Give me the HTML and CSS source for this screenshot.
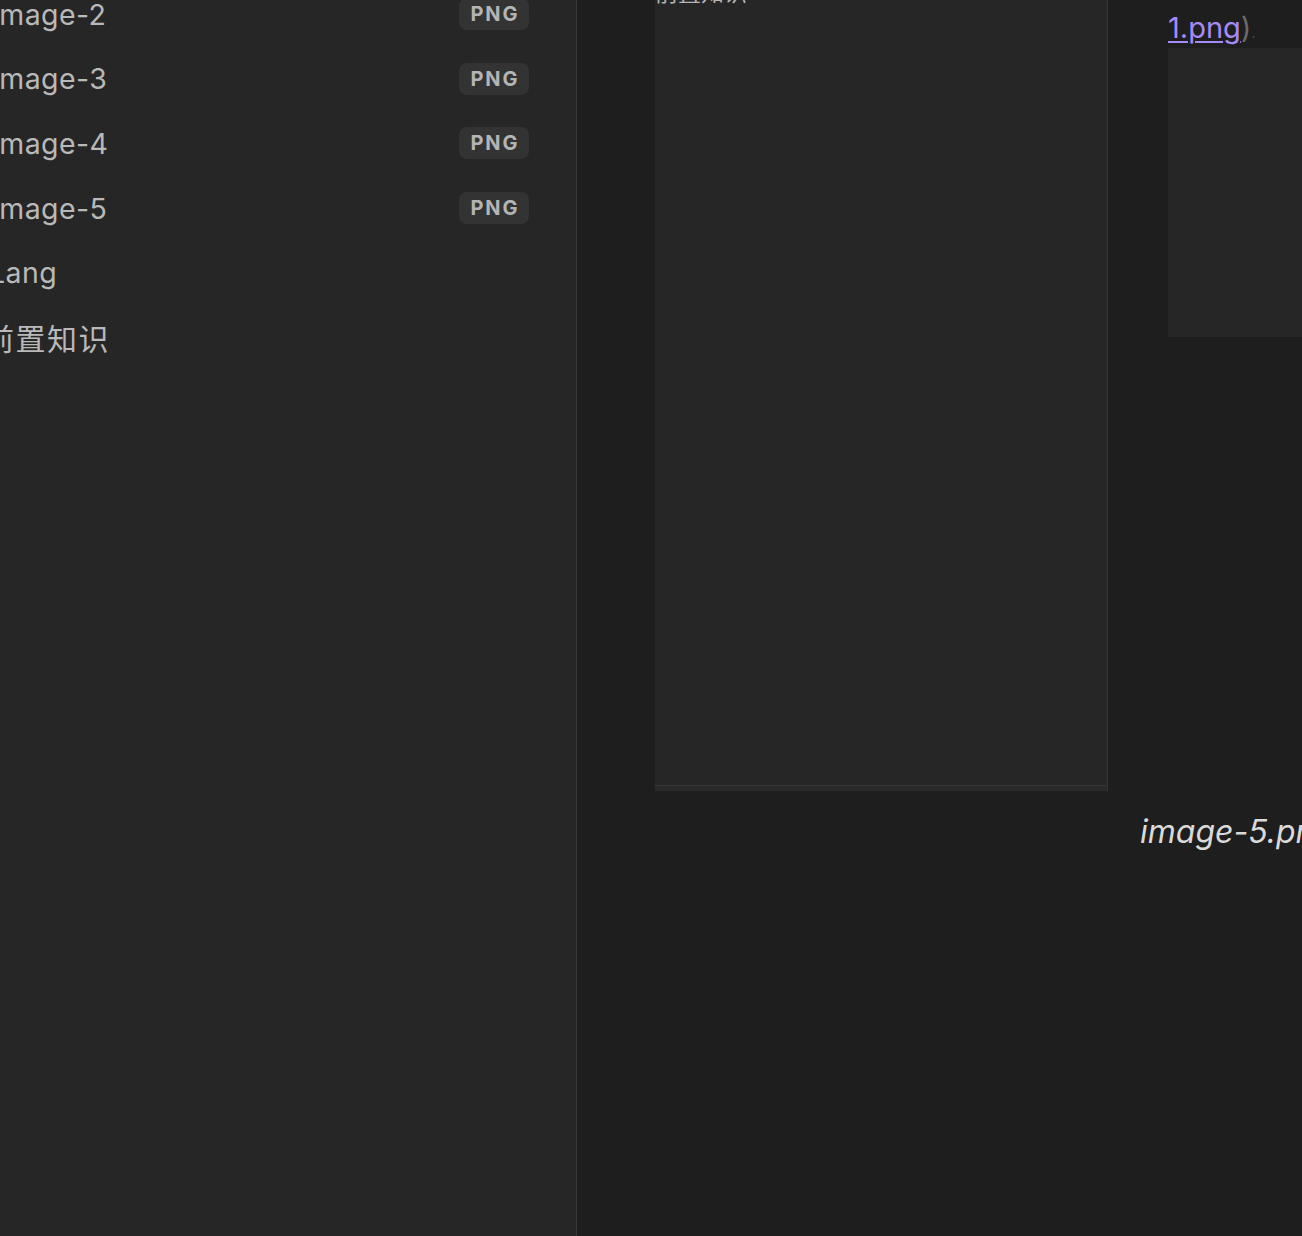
FILE: index.html
```html
<!DOCTYPE html>
<html lang="zh">
<head>
<meta charset="utf-8">
<link rel="stylesheet" href="styles.css">
</head>
<body>
<div class="app">
  <aside class="sidebar">
    <ul class="files">
      <li class="file"><span class="name">image-2</span><span class="badge">PNG</span></li>
      <li class="file"><span class="name">image-3</span><span class="badge">PNG</span></li>
      <li class="file"><span class="name">image-4</span><span class="badge">PNG</span></li>
      <li class="file"><span class="name">image-5</span><span class="badge">PNG</span></li>
      <li class="file"><span class="name name-lang">Lang</span></li>
      <li class="file"><span class="name name-cjk">前置知识</span></li>
    </ul>
  </aside>
  <main class="main">
    <section class="card">
      <div class="card-body">
        <div class="card-title">前置知识</div>
      </div>
      <div class="card-foot"></div>
    </section>
    <section class="preview">
      <p class="link-line"><a class="link">1.png</a><span class="paren">)</span><span class="dot">.</span></p>
      <div class="image-box"></div>
      <p class="caption">image-5.png</p>
    </section>
  </main>
</div>
</body>
</html>
```
FILE: styles.css
```css
html, body {
  margin: 0;
  padding: 0;
  background: #1e1e1e;
  height: 100%;
  overflow: hidden;
}
body {
  font-family: Inter, "Noto Sans CJK SC", sans-serif;
}
.app {
  display: flex;
  height: 1236px;
  width: 1302px;
  overflow: hidden;
}
.sidebar {
  width: 576px;
  flex: none;
  background: #262626;
  border-right: 1px solid #363636;
  overflow: hidden;
}
.files {
  list-style: none;
  margin: -18px 0 0 -8px;
  padding: 0;
}
.file {
  height: 64.6px;
  display: flex;
  align-items: center;
  justify-content: space-between;
  padding-right: 47px;
}
.name {
  font-size: 28.5px;
  color: #b9b9b9;
  letter-spacing: 0.4px;
}
.name-lang {
  margin-left: -3px;
}
.name-cjk {
  font-size: 30px;
  letter-spacing: 1.5px;
  margin-left: -8px;
}
.badge {
  width: 70px;
  height: 32px;
  border-radius: 8px;
  background: #333333;
  color: #b4b4b4;
  font-size: 20px;
  font-weight: 700;
  letter-spacing: 2px;
  display: flex;
  align-items: center;
  justify-content: center;
  box-sizing: border-box;
  padding-left: 2px;
}
.main {
  flex: 1;
  display: flex;
  align-items: flex-start;
  padding-left: 78px;
  gap: 60px;
  overflow: hidden;
  min-width: 0;
}
.card {
  width: 453px;
  flex: none;
  margin-top: -20px;
  background: #262626;
  border-right: 1px solid #353535;
  display: flex;
  flex-direction: column;
  height: 811px;
  box-sizing: border-box;
}
.card-body {
  flex: 1;
  border-bottom: 1px solid #363636;
}
.card-title {
  font-size: 23px;
  line-height: 26px;
  color: #b5b5b5;
}
.card-foot {
  height: 5px;
  background: #2a2a2a;
}
.preview {
  flex: none;
  width: 400px;
  display: flex;
  flex-direction: column;
}
.link-line {
  margin: 8px 0 0;
  font-size: 29px;
  line-height: 40px;
  height: 40px;
}
.link {
  color: #a68af9;
  text-decoration: underline;
  text-underline-offset: 3px;
  text-decoration-thickness: 2px;
}
.paren {
  color: #6a6a6a;
}
.dot {
  color: #555;
  font-size: 14px;
}
.image-box {
  height: 289px;
  width: 300px;
  background: #262626;
}
.caption {
  margin: 473px 0 0 -28px;
  font-size: 32px;
  font-style: italic;
  color: #dadada;
  line-height: 44px;
  white-space: nowrap;
}
```
